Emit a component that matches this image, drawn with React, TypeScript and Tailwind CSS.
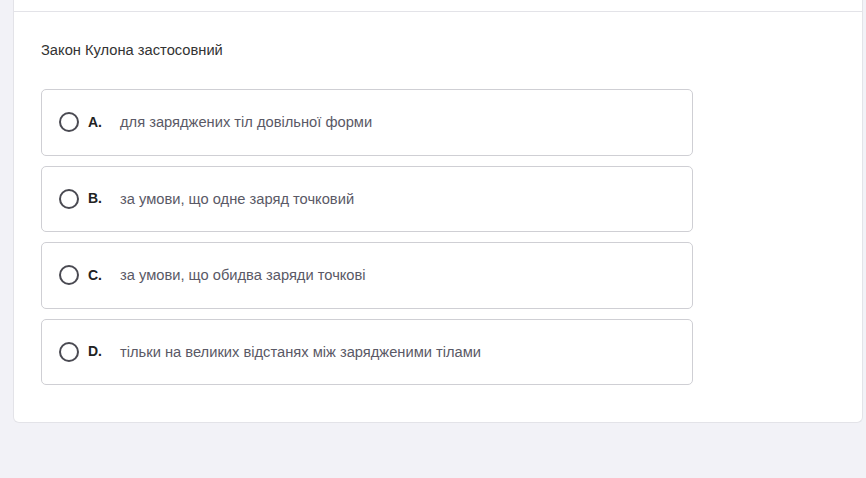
import React from "react";

const options = [
  { l: "A.", t: "для заряджених тіл довільної форми" },
  { l: "B.", t: "за умови, що одне заряд точковий" },
  { l: "C.", t: "за умови, що обидва заряди точкові" },
  { l: "D.", t: "тільки на великих відстанях між зарядженими тілами" },
];

export default function App() {
  return (
    <div
      className="w-[866px] h-[478px] bg-[#f2f2f7] overflow-hidden"
      style={{ fontFamily: '"Liberation Sans", Arial, sans-serif' }}
    >
      <div className="ml-[13px] w-[850px] bg-white border border-t-0 border-[#e3e3e8] rounded-b-md">
        <div className="h-[12px] border-b border-[#e3e3e8]" />
        <div className="pl-[27px] pt-[28px] pb-[37px]">
          <div className="text-[14.7px] leading-[20px] text-[#333]">Закон Кулона застосовний</div>
          <div className="mt-[29px] flex flex-col gap-[10px] w-[652px]">
            {options.map((o) => (
              <div
                key={o.l}
                className="h-[66.5px] border border-[#cfcfd4] rounded-[5px] flex items-center pl-[17px]"
              >
                <div className="w-[20px] h-[20px] rounded-full border-2 border-[#4a4a52] shrink-0" />
                <span className="ml-[9px] w-[32px] text-[14px] font-bold text-[#222]">{o.l}</span>
                <span className="text-[14.7px] text-[#5a5966]">{o.t}</span>
              </div>
            ))}
          </div>
        </div>
      </div>
    </div>
  );
}
